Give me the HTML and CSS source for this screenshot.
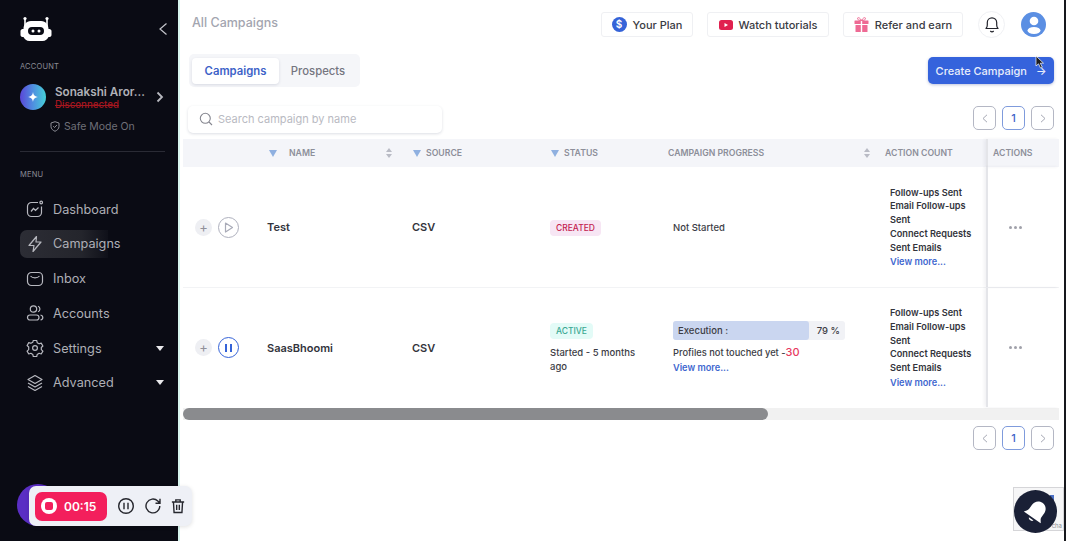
FILE: index.html
```html
<!DOCTYPE html>
<html lang="en">
<head>
    <meta charset="UTF-8">
    <meta name="viewport" content="width=device-width, initial-scale=1.0">
    <title>All Campaigns</title>
    <link rel="stylesheet" href="styles.css">
</head>
<body>
    <aside class="sidebar">
        <div class="brand">
            <svg class="logo" width="32" height="26" viewBox="0 0 32 26">
                <path d="M5 3v9M27 3v9" stroke="#fff" stroke-width="1.6"/>
                <circle cx="5" cy="2.5" r="1.6" fill="#fff"/>
                <circle cx="27" cy="2.5" r="1.6" fill="#fff"/>
                <path d="M11 5h10c5 0 7.500 4 7.500 8h1c1 0 2 1 2 2v4c0 1-1 2-2 2h-1c-1 2-3 4-6 4h-13c-3 0-5-2-6-4h-1c-1 0-2-1-2-2v-4c0-1 1-2 2-2h1c0-4 2.500-8 7.500-8z" fill="#fff"/>
                <rect x="8" y="11" width="16" height="8" rx="4" fill="#0a0b14"/>
                <circle cx="13" cy="15" r="1.500" fill="#fff"/>
                <circle cx="19" cy="15" r="1.500" fill="#fff"/>
            </svg>
            <svg class="collapse" width="10" height="14" viewBox="0 0 10 14" fill="none" stroke="#c4c5cb" stroke-width="1.200"><path d="M8.500 1.500 2 7l6.500 5.500"/></svg>
        </div>

        <div class="side-label">ACCOUNT</div>
        <div class="account">
            <div class="account-pic">
                <svg width="10" height="10" viewBox="0 0 10 10"><path d="M5 0c.5 3 1.500 4.300 5 5-3.500.7-4.500 2-5 5-.5-3-1.500-4.300-5-5 3.500-.7 4.500-2 5-5z" fill="#fff"/></svg>
            </div>
            <div class="account-text">
                <div class="account-name">Sonakshi Aror...</div>
                <div class="account-state">Disconnected</div>
            </div>
            <svg width="8" height="12" viewBox="0 0 8 12" fill="none" stroke="#b8b9c0" stroke-width="1.800"><path d="M1.500 1.500 6 6l-4.500 4.500"/></svg>
        </div>
        <div class="safe-mode">
            <svg width="10" height="11" viewBox="0 0 10 11" fill="none" stroke="#8d8e96"><path d="M5 .7 9 2v3.500c0 2.300-1.800 3.800-4 4.800-2.200-1-4-2.500-4-4.800V2zM3.200 5.200 4.600 6.500 6.900 4"/></svg>
            <span>Safe Mode On</span>
        </div>
        <div class="side-line"></div>

        <div class="side-label menu-label">MENU</div>
        <nav class="menu">
            <div class="menu-item">
                <svg width="18" height="18" viewBox="0 0 18 18" fill="none" stroke="#b8b9c0" stroke-width="1.200"><path d="M12 2.500H5.500a4 4 0 0 0-4 4v6a4 4 0 0 0 4 4h6a4 4 0 0 0 4-4V6.500"/><circle cx="15.200" cy="2.500" r="1.300"/><path d="M5 11.500 7.500 8.500l2 2L12.500 7.500"/></svg>
                <span>Dashboard</span>
            </div>
            <div class="menu-item active">
                <svg width="18" height="18" viewBox="0 0 18 18" fill="none" stroke="#b8b9c0" stroke-width="1.200"><path d="M10.500 1.500 3 10.500h5L7 16.500l8-9.500h-5z" stroke-linejoin="round"/></svg>
                <span>Campaigns</span>
            </div>
            <div class="menu-item">
                <svg width="18" height="18" viewBox="0 0 18 18" fill="none" stroke="#b8b9c0" stroke-width="1.200"><rect x="1.500" y="2.500" width="15" height="13" rx="4"/><path d="M4.500 6c2 2.500 7 2.500 9 0"/></svg>
                <span>Inbox</span>
            </div>
            <div class="menu-item">
                <svg width="18" height="18" viewBox="0 0 18 18" fill="none" stroke="#b8b9c0" stroke-width="1.200"><circle cx="7.500" cy="5" r="3.200"/><rect x="1.500" y="11" width="11.500" height="5" rx="2.500"/><path d="M12 2.200a3 3 0 0 1 0 5.600M14.500 11c1.500.3 2.300 1.400 2.300 2.500s-.8 2.200-2.300 2.500"/></svg>
                <span>Accounts</span>
            </div>
            <div class="menu-item">
                <svg width="18" height="18" viewBox="0 0 18 18" fill="none" stroke="#b8b9c0" stroke-width="1.200"><circle cx="9" cy="9" r="2.400"/><path d="M7.300 1.500h3.400l.5 2.200 1.900 1.100 2.100-.7 1.700 2.900-1.600 1.500v2.100l1.600 1.500-1.700 2.900-2.100-.7-1.900 1.100-.5 2.200H7.300l-.5-2.200-1.900-1.100-2.100.7-1.700-2.900 1.600-1.500V8l-1.600-1.500 1.700-2.900 2.100.7 1.900-1.100z" stroke-linejoin="round"/></svg>
                <span>Settings</span>
                <i class="caret"></i>
            </div>
            <div class="menu-item">
                <svg width="18" height="18" viewBox="0 0 18 18" fill="none" stroke="#b8b9c0" stroke-width="1.200"><path d="M9 1.500 16 5.500 9 9.500 2 5.500zM2 9l7 4 7-4M2 12.500l7 4 7-4" stroke-linejoin="round"/></svg>
                <span>Advanced</span>
                <i class="caret"></i>
            </div>
        </nav>
    </aside>

    <main class="main">
        <header class="topbar">
            <h1>All Campaigns</h1>
            <div class="top-actions">
                <button class="top-btn plan-btn">
                    <span class="dollar">$</span>Your Plan
                </button>
                <button class="top-btn watch-btn">
                    <svg width="14" height="10" viewBox="0 0 14 10"><rect width="14" height="10" rx="2.500" fill="#e0204f"/><path d="M5.500 3v4l3.500-2z" fill="#fff"/></svg>
                    Watch tutorials
                </button>
                <button class="top-btn refer-btn">
                    <svg width="15" height="15" viewBox="0 0 15 15" fill="#ee6a94"><rect x=".5" y="3.500" width="14" height="3.500" rx=".5"/><rect x="1.500" y="8" width="12" height="7" rx=".5"/><path d="M6.800 3.500h1.400V15H6.800z" fill="#fff"/><path d="M7.500 3.500C6 .5 3.500 0 3.500 1.500s2 2 4 2zm0 0c1.500-3 4-3.500 4-2s-2 2-4 2z" fill="none" stroke="#ee6a94"/></svg>
                    Refer and earn
                </button>
                <div class="bell">
                    <svg width="14" height="17" viewBox="0 0 14 17" fill="none" stroke="#22232b" stroke-width="1.200"><path d="M1 12.500c1-1 1.300-2 1.300-3.500V6.500a4.700 4.700 0 0 1 9.400 0V9c0 1.500.3 2.500 1.300 3.500z" stroke-linejoin="round"/><path d="M5.300 15c1 1 2.400 1 3.400 0"/></svg>
                </div>
                <div class="avatar">
                    <svg width="24" height="24" viewBox="0 0 24 24" fill="#fff"><circle cx="12" cy="8" r="4.300"/><ellipse cx="12" cy="17.500" rx="6.500" ry="3.500"/></svg>
                </div>
            </div>
        </header>

        <div class="tools-row">
            <div class="tabs">
                <button class="tab active">Campaigns</button>
                <button class="tab">Prospects</button>
            </div>
            <button class="create-btn">Create Campaign <span>&rarr;</span></button>
        </div>

        <div class="search-row">
            <div class="search">
                <svg width="14" height="14" viewBox="0 0 14 14" fill="none" stroke="#85868f" stroke-width="1.100"><circle cx="6.300" cy="6.300" r="5"/><path d="m10 10 3 3"/></svg>
                <span>Search campaign by name</span>
            </div>
            <div class="pager">
                <button class="page-btn">
                    <svg width="6" height="9" viewBox="0 0 6 9" fill="none" stroke="#a5a7b3"><path d="M5 .8 1 4.500 5 8.200"/></svg>
                </button>
                <button class="page-btn current">1</button>
                <button class="page-btn">
                    <svg width="6" height="9" viewBox="0 0 6 9" fill="none" stroke="#a5a7b3"><path d="M1 .8 5 4.500 1 8.200"/></svg>
                </button>
            </div>
        </div>

        <section class="table">
            <div class="row head">
                <div class="cell filter-cell"><i class="funnel"></i></div>
                <div class="cell">NAME<i class="sort name-sort"></i></div>
                <div class="cell"><i class="funnel"></i>SOURCE</div>
                <div class="cell"><i class="funnel"></i>STATUS</div>
                <div class="cell">CAMPAIGN PROGRESS<i class="sort progress-sort"></i></div>
                <div class="cell">ACTION COUNT</div>
                <div class="cell sticky">ACTIONS</div>
            </div>

            <div class="row first">
                <div class="cell controls">
                    <span class="plus">+</span>
                    <span class="run">
                        <svg width="10" height="11" viewBox="0 0 10 11" fill="none" stroke="#a9abb8" stroke-width="1.200"><path d="M1.500 1 8.500 5.500 1.500 10z" stroke-linejoin="round"/></svg>
                    </span>
                </div>
                <div class="cell name">Test</div>
                <div class="cell name">CSV</div>
                <div class="cell"><span class="badge created">CREATED</span></div>
                <div class="cell progress">Not Started</div>
                <div class="cell counts">
                    <p>Follow-ups Sent</p>
                    <p>Email Follow-ups Sent</p>
                    <p>Connect Requests</p>
                    <p>Sent Emails</p>
                    <a class="more">View more...</a>
                </div>
                <div class="cell sticky dots"><i></i><i></i><i></i></div>
            </div>

            <div class="row second">
                <div class="cell controls">
                    <span class="plus">+</span>
                    <span class="run running"><i></i><i></i></span>
                </div>
                <div class="cell name">SaasBhoomi</div>
                <div class="cell name">CSV</div>
                <div class="cell status-cell">
                    <span class="badge active">ACTIVE</span>
                    <p class="started">Started - 5 months ago</p>
                </div>
                <div class="cell progress">
                    <div class="bar">
                        <div class="bar-fill" style="width: 79%">Execution :</div>
                        <span>79 %</span>
                    </div>
                    <p class="untouched">Profiles not touched yet -<b>30</b></p>
                    <a class="more">View more...</a>
                </div>
                <div class="cell counts">
                    <p>Follow-ups Sent</p>
                    <p>Email Follow-ups Sent</p>
                    <p>Connect Requests</p>
                    <p>Sent Emails</p>
                    <a class="more">View more...</a>
                </div>
                <div class="cell sticky dots"><i></i><i></i><i></i></div>
            </div>

            <div class="scrollbar"><div class="thumb"></div></div>
        </section>

        <div class="pager bottom-pager">
            <button class="page-btn">
                <svg width="6" height="9" viewBox="0 0 6 9" fill="none" stroke="#a5a7b3"><path d="M5 .8 1 4.500 5 8.200"/></svg>
            </button>
            <button class="page-btn current">1</button>
            <button class="page-btn">
                <svg width="6" height="9" viewBox="0 0 6 9" fill="none" stroke="#a5a7b3"><path d="M1 .8 5 4.500 1 8.200"/></svg>
            </button>
        </div>
    </main>

    <!-- things floating over the page -->
    <svg class="cursor" width="10" height="14" viewBox="0 0 10 14"><path d="M1 1v10l2.500-2.200L5.500 13l1.800-.8-2-4H8.500z" fill="#1b1b1f" stroke="#fff" stroke-width=".7"/></svg>

    <div class="recorder-back"></div>
    <div class="recorder">
        <div class="rec-time"><span class="rec-dot"><i></i></span>00:15</div>
        <svg width="18" height="18" viewBox="0 0 18 18" fill="none" stroke="#26272e" stroke-width="1.400"><circle cx="9" cy="9" r="7.300"/><path d="M7 5.800v6.400M11 5.800v6.400"/></svg>
        <svg width="18" height="18" viewBox="0 0 18 18" fill="none" stroke="#26272e" stroke-width="1.400"><path d="M15.800 9a6.900 6.900 0 1 1-2-4.900L16 6.300M16 1.800v4.500h-4.500"/></svg>
        <svg width="14" height="16" viewBox="0 0 16 18" fill="none" stroke="#26272e" stroke-width="1.600"><path d="M1 4.500h14M5.500 4.500V2h5v2.500M2.800 4.500l.7 12h9l.7-12M6.500 7.500v6M9.500 7.500v6"/></svg>
    </div>

    <div class="captcha"><i></i><span>cha</span></div>
    <div class="chat">
        <svg width="28" height="28" viewBox="0 0 30 30"><g transform="rotate(35 15 15)"><path d="M15 3c5 0 8 4 8 8v5c0 3 2 4 3 6H4c1-2 3-3 3-6v-5c0-4 3-8 8-8z" fill="#fff"/><path d="M12 24c1 2.500 5 2.500 6 0z" fill="#fff"/></g></svg>
    </div>
</body>
</html>
```

FILE: styles.css
```css
* {
    margin: 0;
    padding: 0;
    box-sizing: border-box;
    font-family: Inter, "Liberation Sans", sans-serif;
}

body {
    width: 1066px;
    height: 541px;
    overflow: hidden;
    display: flex;
    background-color: #fff;
    border-right: 2px solid #17181d;
    color: #2f3038;
}

button {
    border: none;
    background: none;
    cursor: pointer;
}

/* Sidebar */
.sidebar {
    width: 180px;
    flex-shrink: 0;
    background-color: #0a0b14;
    border-right: 2px solid #d8f5ef;
    padding: 17px 13px 0 20px;
    color: #b5b6bd;
}

.brand {
    display: flex;
    align-items: center;
    justify-content: space-between;
    height: 24px;
}

.collapse {
    margin-right: -3px;
}

.side-label {
    margin-top: 21px;
    font-size: 7.500px;
    letter-spacing: 0.2px;
    color: #8b8c94;
}

.account {
    display: flex;
    align-items: center;
    margin-top: 13px;
    padding-right: 1px;
}

.account-pic {
    width: 26px;
    height: 26px;
    border-radius: 50%;
    flex-shrink: 0;
    display: flex;
    align-items: center;
    justify-content: center;
    background: linear-gradient(90deg, #5a46d8 0%, #4f8fe0 50%, #45d0d8 100%);
}

.account-text {
    flex: 1;
    margin-left: 9px;
    padding-top: 1px;
}

.account-name {
    font-size: 11.700px;
    font-weight: 600;
    color: #b0b1b8;
    line-height: 14px;
}

.account-state {
    font-size: 9.700px;
    font-weight: 500;
    line-height: 11px;
    color: #a3161f;
    text-decoration: line-through;
}

.safe-mode {
    display: flex;
    align-items: center;
    gap: 4px;
    margin: 10px 0 0 30px;
    font-size: 10.500px;
    color: #6f7078;
}

.side-line {
    height: 1px;
    margin-top: 18px;
    background-color: #2a2b35;
}

.side-label.menu-label {
    margin-top: 18px;
}

.menu {
    margin-top: 16px;
    display: flex;
    flex-direction: column;
    gap: 6.800px;
}

.menu-item {
    display: flex;
    align-items: center;
    height: 28px;
    gap: 9px;
    padding-left: 6px;
    font-size: 12.700px;
    color: #aeafb6;
}

.menu-item svg {
    flex-shrink: 0;
}

.menu-item.active {
    background: linear-gradient(90deg, #2c2d35 0%, #24252c 70%, #0f1019 100%) no-repeat;
    background-size: 88px 100%;
    border-radius: 7px;
}

.caret {
    margin-left: auto;
    margin-right: 1px;
    border-left: 4px solid transparent;
    border-right: 4px solid transparent;
    border-top: 5px solid #e9e9ec;
}

/* Main */
.main {
    flex: 1;
    min-width: 0;
}

.topbar {
    display: flex;
    align-items: center;
    justify-content: space-between;
    padding: 10px 18px 0 12px;
    height: 39px;
}

.topbar h1 {
    font-size: 12.500px;
    font-weight: 500;
    color: #a3a5b0;
    margin-top: -4px;
}

.top-actions {
    display: flex;
    align-items: center;
}

.top-btn {
    display: flex;
    align-items: center;
    justify-content: center;
    gap: 6px;
    height: 25px;
    border: 1px solid #eff0f3;
    border-radius: 3px;
    font-size: 11px;
    font-weight: 500;
    color: #3a3b43;
    white-space: nowrap;
}

.plan-btn {
    width: 92px;
    margin-right: 14px;
}

.watch-btn {
    width: 122px;
    margin-right: 14px;
}

.refer-btn {
    width: 120px;
    margin-right: 15px;
}

.dollar {
    width: 15px;
    height: 15px;
    border-radius: 50%;
    background-color: #3563d8;
    color: #fff;
    font-size: 10px;
    font-weight: 600;
    line-height: 15px;
    text-align: center;
}

.bell {
    width: 27px;
    height: 27px;
    border: 1px solid #f0f1f4;
    border-radius: 50%;
    display: flex;
    align-items: center;
    justify-content: center;
    margin-right: 16px;
}

.avatar {
    width: 25px;
    height: 25px;
    border-radius: 50%;
    background-color: #5b8fe3;
    display: flex;
    align-items: center;
    justify-content: center;
}

.tools-row {
    display: flex;
    justify-content: space-between;
    align-items: flex-start;
    padding: 15px 10px 0 9px;
}

.tabs {
    display: flex;
    align-items: center;
    width: 171px;
    height: 33px;
    padding: 0 3px;
    border-radius: 5px;
    background-color: #f5f6f9;
}

.tab {
    flex: 1;
    height: 26px;
    font-size: 11.300px;
    font-weight: 500;
    color: #74757f;
}

.tab.active {
    flex: none;
    width: 87px;
    background-color: #fff;
    border-radius: 4px;
    font-weight: 600;
    color: #3d62c8;
    box-shadow: 0 1px 3px rgba(40, 50, 90, 0.14);
}

.create-btn {
    width: 126px;
    height: 27px;
    margin-top: 3px;
    border-radius: 5px;
    background-color: #3563dc;
    color: #e9eefb;
    font-size: 11px;
    font-weight: 500;
    box-shadow: 0 1px 3px rgba(40, 60, 140, 0.3);
}

.create-btn span {
    margin-left: 6px;
}

.search-row {
    display: flex;
    justify-content: space-between;
    align-items: flex-start;
    padding: 19px 10px 0 8px;
}

.search {
    width: 254px;
    height: 27px;
    display: flex;
    align-items: center;
    gap: 5px;
    padding: 0 0 1px 11px;
    border-radius: 5px;
    background-color: #fff;
    box-shadow: 0 1px 3px rgba(40, 50, 90, 0.16);
    font-size: 11px;
    color: #b9bac2;
}

.pager {
    display: flex;
    gap: 6px;
}

.page-btn {
    width: 23px;
    height: 24px;
    border: 1px solid #b4b7c4;
    border-radius: 5px;
    font-size: 11px;
    font-weight: 500;
    color: #3d62c8;
    display: flex;
    align-items: center;
    justify-content: center;
}

.page-btn.current {
    border-color: #7f9bdc;
}

.bottom-pager {
    justify-content: flex-end;
    padding: 6px 10px 0 0;
}

/* Table */
.table {
    margin: 6px 5px 0 3px;
}

.row {
    display: grid;
    grid-template-columns: 84px 145px 138px 118px 217px 101px 73px;
    border-bottom: 1px solid #f2f3f5;
}

.cell {
    display: flex;
    align-items: center;
    font-size: 10px;
    font-weight: 600;
    color: #33343c;
    position: relative;
}

.row.head {
    height: 28px;
    background-color: #f4f5f9;
    border-bottom: none;
}

.row.head .cell {
    font-size: 8.700px;
    font-weight: 600;
    color: #8d8f9a;
    white-space: nowrap;
}

.row.head .cell:nth-child(2) {
    padding-left: 22px;
}

.row.head .filter-cell {
    padding-left: 85px;
}

.row.head .sticky {
    padding-left: 5px;
}

.funnel {
    width: 0;
    height: 0;
    margin: 0 5px 0 1px;
    border-left: 4px solid transparent;
    border-right: 4px solid transparent;
    border-top: 7px solid #8fb0e0;
}

.sort {
    position: absolute;
    top: 9px;
    width: 6px;
    height: 10px;
}

.sort::before,
.sort::after {
    content: "";
    position: absolute;
    left: 0;
    border-left: 3px solid transparent;
    border-right: 3px solid transparent;
}

.sort::before {
    top: 0;
    border-bottom: 4px solid #b9bbc5;
}

.sort::after {
    bottom: 0;
    border-top: 4px solid #b9bbc5;
}

.name-sort {
    right: 20px;
}

.progress-sort {
    right: 15px;
}

.row.first {
    height: 121px;
}

.row.second {
    height: 119px;
    border-bottom: none;
}

.controls {
    gap: 6px;
    padding-left: 12px;
}

.plus {
    width: 17px;
    height: 17px;
    border-radius: 50%;
    background-color: #eeeff3;
    color: #8f909a;
    font-size: 13px;
    font-weight: 400;
    line-height: 16px;
    text-align: center;
}

.run {
    width: 21px;
    height: 21px;
    border: 1.500px solid #aeb0bd;
    border-radius: 50%;
    display: flex;
    align-items: center;
    justify-content: center;
    gap: 3px;
    padding-left: 1px;
}

.run.running {
    border-color: #3563d8;
    padding-left: 0;
}

.run.running i {
    width: 2px;
    height: 8px;
    background-color: #3563d8;
}

.name {
    font-size: 11px;
    font-weight: 600;
}

.badge {
    display: inline-block;
    padding: 0 6px;
    height: 16px;
    margin-top: 1px;
    border-radius: 4px;
    font-size: 8.500px;
    font-weight: 500;
    line-height: 16px;
}

.badge.created {
    background-color: #f7e6f4;
    color: #c4224f;
}

.badge.active {
    background-color: #e3fbf7;
    color: #3aa893;
}

.status-cell {
    flex-direction: column;
    align-items: flex-start;
    justify-content: center;
}

.started {
    margin-top: 7px;
    width: 100px;
    font-size: 9.500px;
    font-weight: 500;
    line-height: 14px;
    color: #3c3d45;
}

.progress {
    padding-left: 5px;
    font-size: 9.500px;
    font-weight: 500;
    color: #3c3d45;
    flex-direction: column;
    align-items: flex-start;
    justify-content: center;
}

.bar {
    width: 172px;
    height: 19px;
    margin-top: 1px;
    border-radius: 3px;
    background-color: #f1f2f6;
    display: flex;
    align-items: center;
    justify-content: space-between;
    font-size: 9.500px;
}

.bar span {
    padding-right: 5px;
}

.bar-fill {
    flex-shrink: 0;
    height: 100%;
    border-radius: 3px;
    background-color: #cad6f0;
    padding-left: 5px;
    line-height: 19px;
}

.untouched {
    margin-top: 5px;
    font-size: 9.300px;
    line-height: 14px;
}

.untouched b {
    font-size: 11px;
    font-weight: 500;
    color: #e73a5e;
}

.more {
    font-size: 9.200px;
    font-weight: 600;
    line-height: 15px;
    color: #3f67cf;
}

.counts {
    flex-direction: column;
    align-items: flex-start;
    justify-content: center;
    padding: 1px 0 0 5px;
    font-size: 9.200px;
    font-weight: 600;
    line-height: 13.700px;
}

.sticky {
    border-left: 2px solid #e4e5e9;
    box-shadow: -2px 0 3px rgba(40, 40, 60, 0.06);
}

.dots {
    gap: 2px;
    padding-left: 21px;
}

.dots i {
    width: 3px;
    height: 3px;
    border-radius: 50%;
    background-color: #a0a1aa;
}

.scrollbar {
    height: 12px;
    margin-top: 1px;
    background-color: #f1f1f1;
}

.thumb {
    width: 585px;
    height: 100%;
    border-radius: 6px;
    background-color: #8a8b8e;
}

/* Floating */
.cursor {
    position: absolute;
    left: 1035px;
    top: 55px;
}

.recorder-back {
    position: absolute;
    left: 17px;
    top: 484px;
    width: 42px;
    height: 42px;
    border-radius: 50%;
    background-color: #5a2ec4;
}

.recorder {
    position: absolute;
    left: 29px;
    top: 486px;
    width: 163px;
    height: 40px;
    padding: 0 6px;
    display: flex;
    align-items: center;
    gap: 9px;
    border-radius: 7px;
    background-color: #eef0f6;
    box-shadow: 0 1px 4px rgba(0, 0, 0, 0.12);
}

.rec-time {
    width: 72px;
    height: 29px;
    margin-right: 1px;
    display: flex;
    align-items: center;
    gap: 7px;
    padding-left: 6px;
    border-radius: 7px;
    background-color: #f31f5c;
    color: #fff;
    font-size: 12px;
    font-weight: 600;
}

.rec-dot {
    width: 16px;
    height: 16px;
    border-radius: 50%;
    background-color: #fff;
    display: flex;
    align-items: center;
    justify-content: center;
}

.rec-dot i {
    width: 8px;
    height: 8px;
    border-radius: 2px;
    background-color: #f31f5c;
}

.captcha {
    position: absolute;
    left: 1013px;
    top: 487px;
    width: 51px;
    height: 44px;
    border: 1px solid #d5d5d8;
    background-color: #f6f6f7;
}

.captcha i {
    position: absolute;
    left: 36px;
    top: 7px;
    width: 4px;
    height: 5px;
    background-color: #4a6fc4;
}

.captcha span {
    position: absolute;
    right: 1px;
    bottom: 1px;
    font-size: 6px;
    color: #8d8e94;
}

.chat {
    position: absolute;
    left: 1014px;
    top: 490px;
    width: 43px;
    height: 43px;
    border-radius: 50%;
    background-color: #1a2036;
    display: flex;
    align-items: center;
    justify-content: center;
}
```
